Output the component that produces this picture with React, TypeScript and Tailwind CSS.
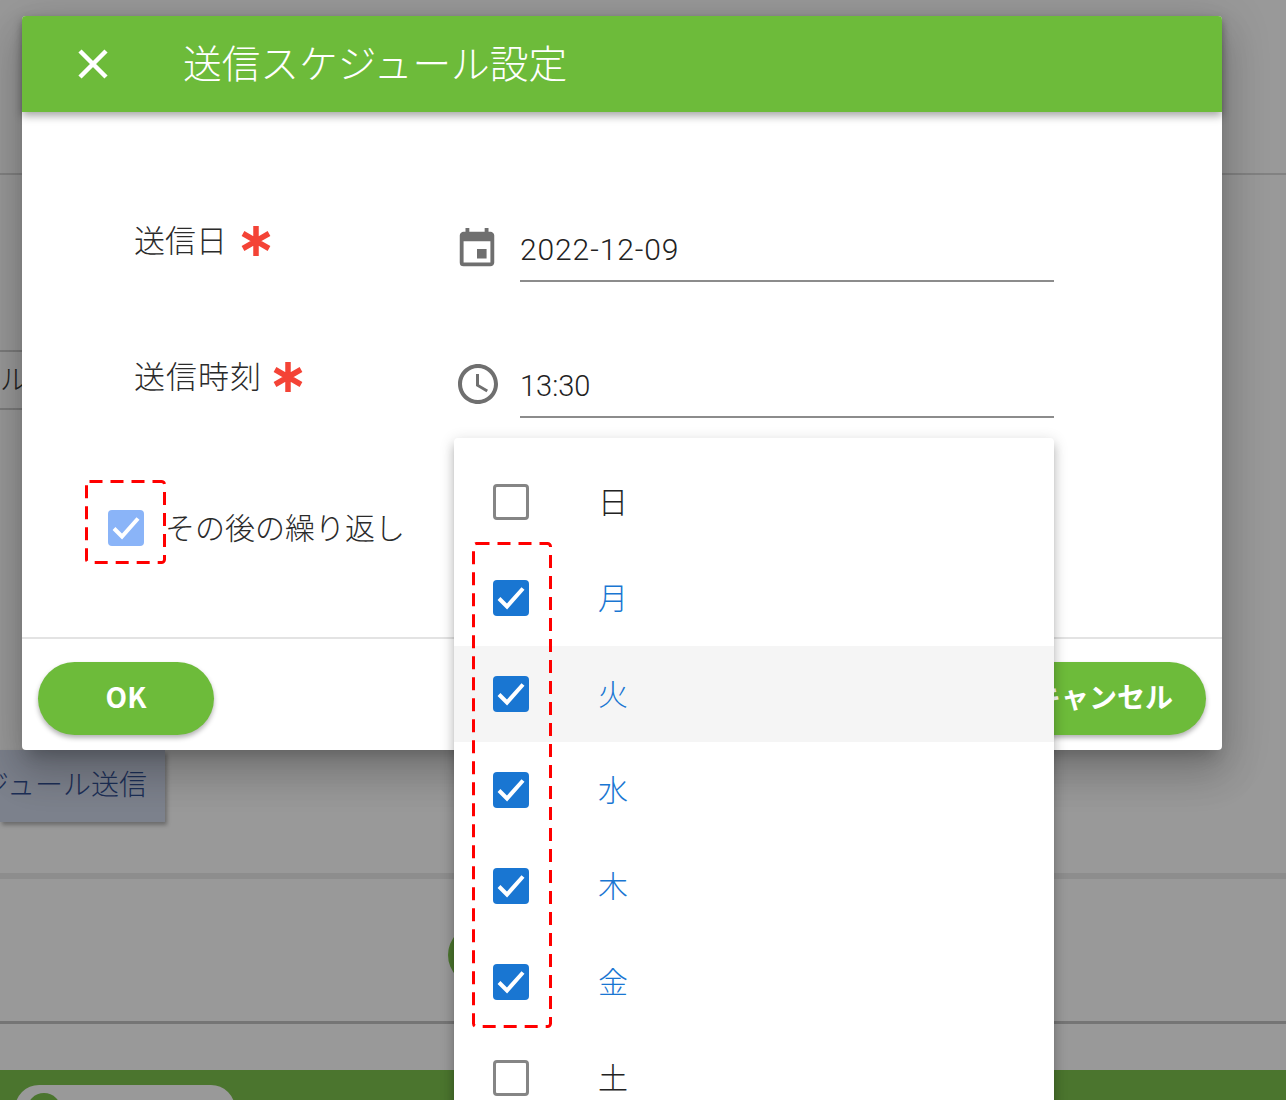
import type { ReactNode } from 'react'
import { MdEvent, MdAccessTime } from 'react-icons/md'

const days = [
  { label: '日', checked: false },
  { label: '月', checked: true },
  { label: '火', checked: true, active: true },
  { label: '水', checked: true },
  { label: '木', checked: true },
  { label: '金', checked: true },
  { label: '土', checked: false },
]

function RequiredMark() {
  return (
    <svg viewBox="0 0 32 32" className="h-[32px] w-[32px] shrink-0" stroke="#f44336" strokeWidth="5.5">
      <path d="M16 1v30M3 8.5l26 15M29 8.5l-26 15" />
    </svg>
  )
}

function Checkbox({ checked, light }: { checked: boolean; light?: boolean }) {
  if (!checked) {
    return <span className="h-[36px] w-[36px] shrink-0 rounded-[4px] border-[3px] border-[#858585] bg-white" />
  }
  return (
    <span className={`flex h-[36px] w-[36px] shrink-0 items-center justify-center rounded-[4px] ${light ? 'bg-[#8ab4f8]' : 'bg-[#1976d2]'}`}>
      <svg viewBox="0 0 36 36" className="h-[36px] w-[36px]" fill="none" stroke="#fff" strokeWidth="4">
        <path d="M6 18.5l8 8L30 8.5" />
      </svg>
    </span>
  )
}

function Field({ label, labelClass, icon, value, valueClass }: { label: string; labelClass: string; icon: ReactNode; value: string; valueClass: string }) {
  return (
    <div className="flex h-[136px] items-end">
      <div className="flex h-[66px] w-[432px] items-start pl-[112px] text-[31px] leading-[50px]">
        <span className={labelClass}>{label}</span>
        <span className="mt-[11px]"><RequiredMark /></span>
      </div>
      <div className="flex h-[66px] items-start">
        <div className="flex w-[66px] pt-[12px] text-[#6f6f6f]">{icon}</div>
        <div className={`h-[68px] w-[534px] border-b-2 border-[#8c8c8c] pt-[16px] font-['Roboto'] leading-[40px] font-light text-[#222] ${valueClass}`}>
          {value}
        </div>
      </div>
    </div>
  )
}

function DashedBox({ className, width, height }: { className: string; width: number; height: number }) {
  return (
    <svg className={`absolute ${className}`} width={width} height={height} fill="none" stroke="#ff0000" strokeWidth="3">
      <rect x="1.5" y="1.5" width={width - 3} height={height - 3} rx="3" strokeDasharray="13 8" />
    </svg>
  )
}

export default function App() {
  return (
    <div className="relative h-[1100px] w-[1286px] overflow-hidden bg-[#999999] font-['Noto_Sans_CJK_JP',sans-serif] font-light text-[#2b2b2b]">
      {/* page behind the modal */}
      <div className="flex h-[1100px] flex-col">
        <div className="h-[175px] shrink-0 border-b-2 border-[#828282]" />
        <div className="mt-[175px] flex h-[60px] w-[22px] shrink-0 items-center overflow-hidden border-y-2 border-[#7c7c7c] pb-[4px] text-[28px] text-[#222]">
          ル
        </div>
        <div className="mt-[340px] flex h-[72px] w-[165px] shrink-0 items-center justify-end overflow-hidden bg-[#7c818c] pr-[18px] pb-[6px] text-[28px] whitespace-nowrap text-[#1c2f57] shadow-[2px_3px_4px_rgba(0,0,0,0.3)]">
          ジュール送信
        </div>
        <div className="mt-[51px] h-[6px] shrink-0 bg-[#8d8d8d]" />
        <div className="mt-[142px] h-[3px] shrink-0 bg-[#757575]" />
        <div className="mt-[46px] h-[30px] shrink-0 overflow-hidden bg-[#4b752e] pt-[15px] pl-[15px]">
          <div className="h-[40px] w-[220px] rounded-t-[24px] bg-[#999999] pt-[8px] pl-[12px]">
            <div className="h-[34px] w-[34px] rounded-full bg-[#4b752e]" />
          </div>
        </div>
      </div>
      <div className="absolute top-[925px] left-[448px] h-[60px] w-[60px] rounded-full bg-[#4b752e]" />

      {/* modal */}
      <div className="absolute top-[16px] left-[22px] flex h-[734px] w-[1200px] flex-col rounded-[4px] bg-white shadow-[0_11px_15px_-7px_rgba(0,0,0,0.2),0_24px_38px_3px_rgba(0,0,0,0.14),0_9px_46px_8px_rgba(0,0,0,0.12)]">
        <div className="flex h-[96px] shrink-0 items-center rounded-t-[4px] bg-[#6dbb3a] pl-[56px] text-white shadow-[0_4px_8px_rgba(0,0,0,0.35)]">
          <svg viewBox="0 0 30 30" className="h-[30px] w-[30px]" fill="none" stroke="currentColor" strokeWidth="4.5">
            <path d="M2 2l26 26M28 2L2 28" />
          </svg>
          <span className="mb-[6px] ml-[75px] text-[38.7px] leading-none">送信スケジュール設定</span>
        </div>

        <div className="flex-1 pt-[32px]">
          <Field label="送信日" labelClass="mr-[13px]" icon={<MdEvent className="h-[46px] w-[46px]" />} value="2022-12-09" valueClass="text-[30px] tracking-[0.9px]" />
          <Field label="送信時刻" labelClass="mr-[10px] tracking-[1px]" icon={<MdAccessTime className="mt-[-2px] h-[48px] w-[48px]" />} value="13:30" valueClass="text-[29px]" />
          <div className="mt-[90px] flex items-center pl-[86px]">
            <Checkbox checked light />
            <span className="mb-[4px] ml-[21px] text-[30px] leading-[40px]">その後の繰り返し</span>
          </div>
        </div>

        <div className="flex h-[113px] shrink-0 items-start justify-between border-t-2 border-[#e3e3e3] px-[16px] pt-[23px]">
          <button className="h-[73px] w-[176px] rounded-full bg-[#6dbb3a] pb-[6px] text-[28px] font-bold text-white shadow-[0_3px_5px_rgba(0,0,0,0.3)]">
            OK
          </button>
          <button className="h-[73px] rounded-full bg-[#6dbb3a] px-[33px] pb-[6px] text-[28px] font-bold text-white shadow-[0_3px_5px_rgba(0,0,0,0.3)]">
            キャンセル
          </button>
        </div>
      </div>

      {/* open weekday menu */}
      <div className="absolute top-[438px] left-[454px] w-[600px] rounded-[4px] bg-white py-[16px] shadow-[0_5px_5px_-3px_rgba(0,0,0,0.2),0_8px_10px_1px_rgba(0,0,0,0.14),0_3px_14px_2px_rgba(0,0,0,0.12)]">
        {days.map((day) => (
          <div key={day.label} className={`flex h-[96px] items-center pl-[39px] ${day.active ? 'bg-[#f5f5f5]' : ''}`}>
            <Checkbox checked={day.checked} />
            <span className={`mb-[4px] ml-[69px] text-[30px] leading-none ${day.checked ? 'text-[#1976d2]' : 'text-[#222]'}`}>{day.label}</span>
          </div>
        ))}
      </div>

      {/* red dashed callouts */}
      <DashedBox className="top-[480px] left-[85px]" width={81} height={84} />
      <DashedBox className="top-[542px] left-[472px]" width={80} height={486} />
    </div>
  )
}
